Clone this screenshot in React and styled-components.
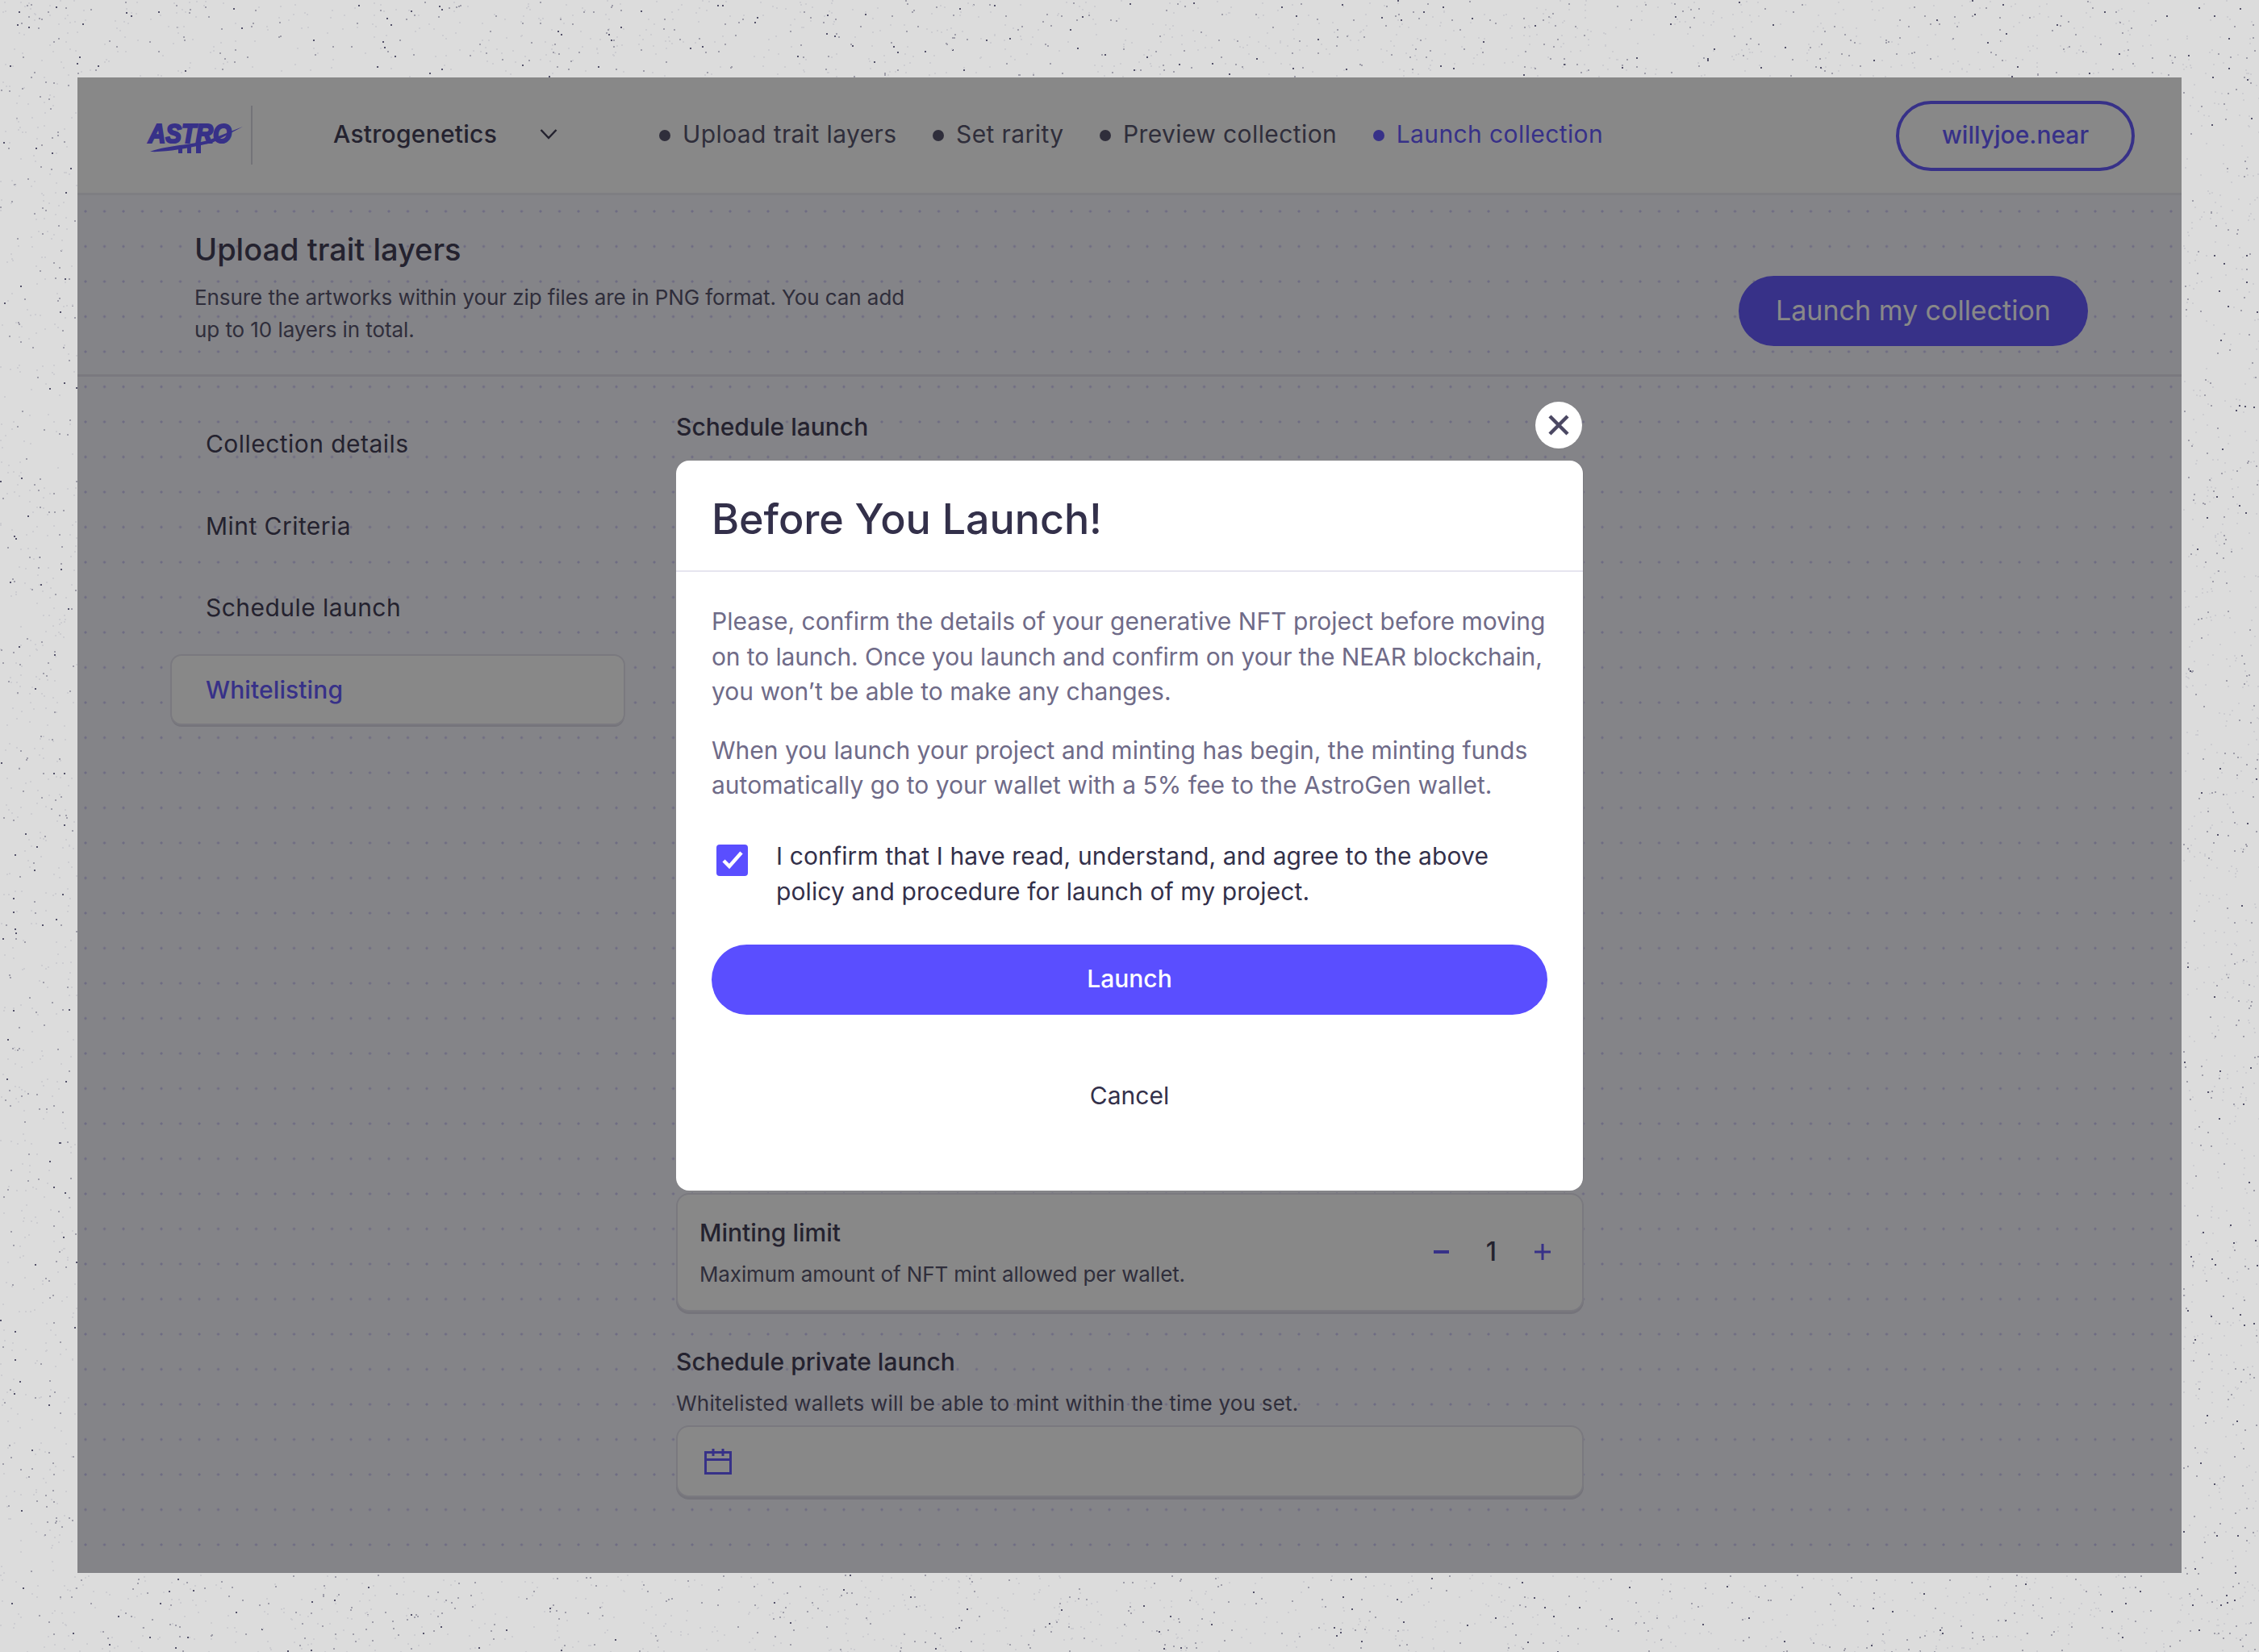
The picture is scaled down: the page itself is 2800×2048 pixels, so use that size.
import { useMemo } from "react";
import styled, { createGlobalStyle } from "styled-components";

const Global = createGlobalStyle`
  html, body { margin: 0; padding: 0; }
  body { background: #dcdcdc; font-family: "Inter", "Liberation Sans", sans-serif; }
  * { box-sizing: border-box; }
`;

const Page = styled.div`
  position: relative;
  width: 2800px;
  height: 2048px;
  padding: 96px;
  overflow: hidden;
`;

const Speckles = styled.svg`
  position: absolute;
  inset: 0;
`;

const Frame = styled.div`
  position: relative;
  width: 2608px;
  height: 1854px;
  background-color: #f7f6ff;
  background-image: radial-gradient(circle, #cbc6f4 1.3px, transparent 1.8px);
  background-size: 23.5px 43.5px;
  background-position: -1.75px 13.75px;
  overflow: hidden;
`;

const TopBar = styled.header`
  display: flex;
  align-items: center;
  height: 146px;
  padding: 0 58px 0 87px;
  background: #fff;
  border-bottom: 3px solid #ebeaf3;
`;

const Logo = styled.div`
  display: flex;
  align-items: center;
  height: 73px;
  width: 130px;
  border-right: 2px solid #d5d4de;
`;

const ProjectPicker = styled.div`
  display: flex;
  align-items: center;
  width: 504px;
  padding: 0 0 3px 100px;
  font-size: 30px;
  font-weight: 500;
  letter-spacing: 0.25px;
  color: #33304a;
`;

const Chevron = styled.svg`
  margin-left: 53px;
`;

const Steps = styled.nav`
  display: flex;
  align-items: center;
  gap: 44.5px;
  flex: 1;
  padding-bottom: 3px;
`;

const Step = styled.span`
  display: flex;
  align-items: center;
  gap: 15px;
  font-size: 30px;
  letter-spacing: 0.4px;
  color: ${(p) => (p.$active ? "#5a4eff" : "#4b4863")};

  &::before {
    content: "";
    width: 14px;
    height: 14px;
    margin-top: 3px;
    border-radius: 50%;
    background: ${(p) => (p.$active ? "#5a4eff" : "#4b4863")};
  }
`;

const UserButton = styled.button`
  width: 296px;
  height: 87px;
  margin-top: 2px;
  padding: 0 0 4px;
  border: 4px solid #5a4eff;
  border-radius: 44px;
  background: transparent;
  font-family: inherit;
  font-size: 30px;
  font-weight: 500;
  color: #5a4eff;
`;

const SubBar = styled.section`
  display: flex;
  align-items: flex-end;
  justify-content: space-between;
  height: 225px;
  padding: 0 116px 35px 145px;
  border-bottom: 3px solid #e2e1ec;
`;

const SubHeading = styled.div`
  align-self: flex-start;
  padding-top: 42px;
`;

const SubTitle = styled.h1`
  margin: 0 0 15px;
  font-size: 38px;
  font-weight: 500;
  line-height: 50px;
  color: #33304a;
`;

const SubText = styled.p`
  margin: 0;
  width: 900px;
  font-size: 26px;
  line-height: 40px;
  letter-spacing: -0.07px;
  color: #4b4863;
`;

const PrimaryButton = styled.button`
  width: ${(p) => p.$width};
  height: 87px;
  padding: 0 0 3px;
  border: 0;
  border-radius: 44px;
  background: #5a4eff;
  color: #fff;
  font-family: inherit;
  font-size: ${(p) => p.$size};
  font-weight: ${(p) => p.$weight || 400};
`;

const LaunchButton = styled(PrimaryButton)`
  margin-top: 44px;
`;

const Body = styled.div`
  display: flex;
  padding: 0 0 0 117px;
`;

const Side = styled.aside`
  display: flex;
  flex-direction: column;
  gap: 17.7px;
  width: 560px;
  margin-right: 65px;
  padding-top: 41px;
`;

const SideItem = styled.div`
  display: flex;
  align-items: center;
  height: 84px;
  padding-left: 42px;
  border-radius: 12px;
  font-size: 30px;
  letter-spacing: ${(p) => (p.$active ? "0.1px" : "0.45px")};
  font-weight: ${(p) => (p.$active ? 500 : 400)};
  color: ${(p) => (p.$active ? "#5a4eff" : "#33304a")};
  background: ${(p) => (p.$active ? "#fff" : "transparent")};
  box-shadow: ${(p) => (p.$active ? "0 0 0 2px #e2e1ec, 0 3px 0 1px #d8d7e4" : "none")};
`;

const Main = styled.main`
  width: 1125px;
  padding-top: 42px;
`;

const Label = styled.h2`
  margin: 0;
  font-size: 30px;
  font-weight: 500;
  line-height: 40px;
  color: #33304a;
`;

const Hint = styled.p`
  margin: 0;
  font-size: 26px;
  line-height: 36px;
  letter-spacing: ${(p) => p.$spacing || "0"};
  color: #4b4863;
`;

const CoveredCard = styled.div`
  height: 904px;
  margin: 22px 0 4px;
  border: 2px solid #e2e1ec;
  border-radius: 16px;
  background: #fff;
`;

const LimitCard = styled.div`
  display: flex;
  align-items: center;
  justify-content: space-between;
  height: 147px;
  padding: 0 38px 0 27px;
  border: 2px solid #e2e1ec;
  border-radius: 16px;
  background: #fff;
  box-shadow: 0 3px 0 #d8d7e4;
`;

const LimitText = styled.div`
  display: flex;
  flex-direction: column;
  gap: 14px;
`;

const Stepper = styled.div`
  display: flex;
  align-items: center;
  gap: 46px;
  font-size: 32px;
  font-weight: 500;
  line-height: 40px;
  padding-bottom: 2px;
  color: #33304a;
`;

const PrivateBlock = styled.div`
  display: flex;
  flex-direction: column;
  gap: 14px;
  margin-top: 42px;
`;

const DateField = styled.div`
  display: flex;
  align-items: center;
  height: 89px;
  margin-top: -5px;
  padding-left: 33px;
  border: 2px solid #e2e1ec;
  border-radius: 16px;
  background: #fff;
  box-shadow: 0 3px 0 #d8d7e4;
`;

const Scrim = styled.div`
  position: absolute;
  inset: 0;
  background: rgba(21, 21, 21, 0.51);
`;

const Modal = styled.div`
  position: absolute;
  left: 742px;
  top: 475px;
  width: 1124px;
  height: 905px;
  border-radius: 16px;
  background: #fff;
`;

const CloseButton = styled.button`
  position: absolute;
  right: 1px;
  top: -73px;
  display: flex;
  align-items: center;
  justify-content: center;
  width: 58px;
  height: 58px;
  padding: 0;
  border: 0;
  border-radius: 50%;
  background: #fff;
`;

const ModalHead = styled.div`
  display: flex;
  align-items: center;
  height: 138px;
  padding: 8px 44px 0;
  border-bottom: 2px solid #e6e5ef;
`;

const ModalTitle = styled.h1`
  margin: 0;
  font-size: 52px;
  font-weight: 500;
  letter-spacing: -0.05px;
  color: #33304a;
`;

const ModalBody = styled.div`
  display: flex;
  flex-direction: column;
  padding: 40px 44px 0;
`;

const Para = styled.p`
  margin: 0 0 29px;
  font-size: 30px;
  line-height: 43.6px;
  letter-spacing: 0.02px;
  white-space: nowrap;
  color: #6f6b88;
`;

const TightLine = styled.span`
  letter-spacing: -0.12px;
`;

const ConfirmRow = styled.label`
  display: flex;
  align-items: flex-start;
  gap: 35px;
  padding: 15px 0 0 6px;
  font-size: 30px;
  line-height: 43.6px;
  letter-spacing: 0.12px;
  color: #33304a;
`;

const CheckBox = styled.span`
  display: flex;
  flex: none;
  align-items: center;
  justify-content: center;
  width: 39px;
  height: 39px;
  margin-top: 7px;
  border-radius: 4px;
  background: #5a4eff;
`;

const CancelLink = styled.div`
  margin-top: 80px;
  font-size: 30px;
  font-weight: 400;
  line-height: 40px;
  text-align: center;
  color: #33304a;
`;

function speckleField() {
  let seed = 41;
  const rnd = () => {
    seed = (seed * 16807) % 2147483647;
    return seed / 2147483647;
  };
  const dots = [];
  while (dots.length < 4200) {
    const x = Math.floor(rnd() * 2800);
    const y = Math.floor(rnd() * 2048);
    if (x > 94 && x < 2706 && y > 94 && y < 1952) continue;
    const roll = rnd();
    dots.push({ x, y, fill: roll < 0.08 ? "#55536a" : roll < 0.35 ? "#9f9ea9" : "#cdcdd1" });
  }
  return dots;
}

const Background = () => {
  const dots = useMemo(speckleField, []);
  return (
    <Speckles width="2800" height="2048">
      {dots.map((d, i) => (
        <rect key={i} x={d.x} y={d.y} width="2" height="2" fill={d.fill} />
      ))}
    </Speckles>
  );
};

const AstroLogo = () => (
  <svg width="120" height="46" viewBox="0 0 120 46" overflow="visible">
    <text x="1" y="32" fontFamily="Liberation Sans" fontStyle="italic" fontWeight="700" fontSize="33" textLength="103" lengthAdjust="spacingAndGlyphs" fill="#5a4eff" stroke="#5a4eff" strokeWidth="2.2">ASTRO</text>
    <path d="M3 43 C20 36 50 35 75 29 L118 12 L80 32 C50 39 24 44 3 43Z" fill="#5a4eff" />
    <path d="M38 36h5v9h-5zM49 35h5v10h-5zM60 34h6v11h-6z" fill="#5a4eff" />
  </svg>
);

const PlusMinus = ({ plus }) => (
  <svg width="22" height="22" viewBox="0 0 22 22">
    {plus ? (
      <path d="M11 1v20M1 11h20" stroke="#5a4eff" strokeWidth="3" fill="none" />
    ) : (
      <path d="M3 11h19" stroke="#5a4eff" strokeWidth="4" fill="none" />
    )}
  </svg>
);

const App = () => (
  <Page>
    <Global />
    <Background />
    <Frame>
      <TopBar>
        <Logo><AstroLogo /></Logo>
        <ProjectPicker>
          Astrogenetics
          <Chevron width="22" height="14" viewBox="0 0 22 14">
            <path d="M1.5 2l9.5 10 9.5-10" fill="none" stroke="#33304a" strokeWidth="2.5" />
          </Chevron>
        </ProjectPicker>
        <Steps>
          <Step>Upload trait layers</Step>
          <Step>Set rarity</Step>
          <Step>Preview collection</Step>
          <Step $active>Launch collection</Step>
        </Steps>
        <UserButton>willyjoe.near</UserButton>
      </TopBar>
      <SubBar>
        <SubHeading>
          <SubTitle>Upload trait layers</SubTitle>
          <SubText>Ensure the artworks within your zip files are in PNG format. You can add up to 10 layers in total.</SubText>
        </SubHeading>
        <PrimaryButton $width="433px" $size="34px">Launch my collection</PrimaryButton>
      </SubBar>
      <Body>
        <Side>
          <SideItem>Collection details</SideItem>
          <SideItem>Mint Criteria</SideItem>
          <SideItem>Schedule launch</SideItem>
          <SideItem $active>Whitelisting</SideItem>
        </Side>
        <Main>
          <Label>Schedule launch</Label>
          <CoveredCard />
          <LimitCard>
            <LimitText>
              <Label>Minting limit</Label>
              <Hint $spacing="-0.12px">Maximum amount of NFT mint allowed per wallet.</Hint>
            </LimitText>
            <Stepper>
              <PlusMinus />
              <span>1</span>
              <PlusMinus plus />
            </Stepper>
          </LimitCard>
          <PrivateBlock>
            <Label>Schedule private launch</Label>
            <Hint $spacing="0.22px">Whitelisted wallets will be able to mint within the time you set.</Hint>
            <DateField>
              <svg width="34" height="32" viewBox="0 0 34 32" fill="none" stroke="#5a4eff" strokeWidth="3">
                <path d="M1.5 4.5h31v26h-31zM1.5 13.5h31M11 0v9M23 0v9" />
              </svg>
            </DateField>
          </PrivateBlock>
        </Main>
      </Body>
      <Scrim />
      <Modal>
        <CloseButton>
          <svg width="26" height="26" viewBox="0 0 26 26">
            <path d="M2 2l22 22M24 2L2 24" stroke="#4b4863" strokeWidth="4.5" fill="none" />
          </svg>
        </CloseButton>
        <ModalHead>
          <ModalTitle>Before You Launch!</ModalTitle>
        </ModalHead>
        <ModalBody>
          <Para>
            Please, confirm the details of your generative NFT project before moving<br />
            <TightLine>on to launch. Once you launch and confirm on your the NEAR blockchain,</TightLine><br />
            you won’t be able to make any changes.
          </Para>
          <Para>
            When you launch your project and minting has begin, the minting funds<br />
            automatically go to your wallet with a 5% fee to the AstroGen wallet.
          </Para>
          <ConfirmRow>
            <CheckBox>
              <svg width="28" height="24" viewBox="0 0 28 24">
                <path d="M3 13l7 7L25 3" stroke="#fff" strokeWidth="4.5" fill="none" />
              </svg>
            </CheckBox>
            <span>I confirm that I have read, understand, and agree to the above policy and procedure for launch of my project.</span>
          </ConfirmRow>
          <LaunchButton $width="1036px" $size="30px" $weight="500">Launch</LaunchButton>
          <CancelLink>Cancel</CancelLink>
        </ModalBody>
      </Modal>
    </Frame>
  </Page>
);

export default App;
